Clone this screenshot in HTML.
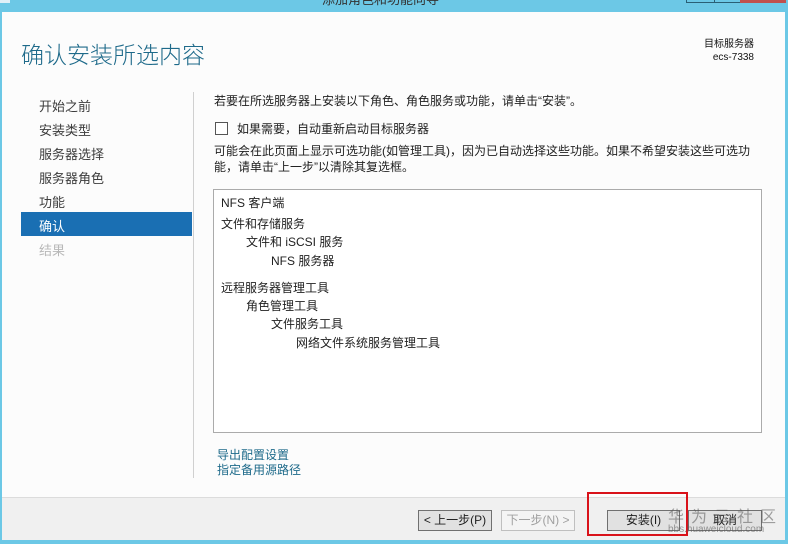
<!DOCTYPE html>
<html><head><meta charset="utf-8"><style>
*{margin:0;padding:0;box-sizing:border-box}
body{width:788px;height:544px;overflow:hidden;background:#6cc8e6;font-family:"Liberation Sans","Noto Sans CJK SC",sans-serif;position:relative;font-size:12px;color:#1e1e1e}
.a{position:absolute}
.win{left:2px;top:12px;width:783px;height:528px;background:#fcfcfc}
.nav{left:39px;font-size:13px;color:#3c3c3c}
.t{font-size:12px;color:#1e1e1e;white-space:nowrap}
.btn{height:21px;border:1px solid #707070;background:#e1e1e1;font-size:12px;text-align:center;line-height:19px}
</style></head><body>
<div class="a" style="left:0;top:0;width:10px;height:3px;background:#e0f0f8"></div>
<div class="a t" style="left:322px;top:-11px;color:#333;font-size:13px">添加角色和功能向导</div>
<div class="a" style="left:686px;top:0;width:28px;height:3px;border-left:1px solid #2a5f75;border-bottom:1px solid #2a5f75"></div>
<div class="a" style="left:714px;top:0;width:26px;height:3px;border-left:1px solid #2a5f75;border-bottom:1px solid #2a5f75"></div>
<div class="a" style="left:740px;top:0;width:46px;height:3px;background:#c0504d"></div>
<div class="a win"></div>
<div class="a" style="left:21px;top:36px;font-size:23px;color:#1e6a8a;font-weight:300">确认安装所选内容</div>
<div class="a t" style="right:34px;top:38px;font-size:10px;text-align:right;line-height:13px;color:#111">目标服务器<br>ecs-7338</div>
<div class="a nav" style="top:96px">开始之前</div>
<div class="a nav" style="top:120px">安装类型</div>
<div class="a nav" style="top:144px">服务器选择</div>
<div class="a nav" style="top:168px">服务器角色</div>
<div class="a nav" style="top:192px">功能</div>
<div class="a" style="left:21px;top:212px;width:171px;height:24px;background:#1a6fb3"></div>
<div class="a nav" style="top:216px;color:#fff">确认</div>
<div class="a nav" style="top:240px;color:#b8b8b8">结果</div>
<div class="a" style="left:193px;top:92px;width:1px;height:386px;background:#d0d0d0"></div>
<div class="a t" style="left:214px;top:92px">若要在所选服务器上安装以下角色、角色服务或功能，请单击“安装”。</div>
<div class="a" style="left:215px;top:122px;width:13px;height:13px;border:1px solid #555;background:#fff"></div>
<div class="a t" style="left:237px;top:120px">如果需要，自动重新启动目标服务器</div>
<div class="a t" style="left:214px;top:143px;line-height:16px">可能会在此页面上显示可选功能(如管理工具)，因为已自动选择这些功能。如果不希望安装这些可选功<br>能，请单击“上一步”以清除其复选框。</div>
<div class="a" style="left:213px;top:189px;width:549px;height:244px;border:1px solid #ababab;background:#fff"></div>
<div class="a t" style="left:221px;top:194px">NFS 客户端</div>
<div class="a t" style="left:221px;top:215px">文件和存储服务</div>
<div class="a t" style="left:246px;top:233px">文件和 iSCSI 服务</div>
<div class="a t" style="left:271px;top:252px">NFS 服务器</div>
<div class="a t" style="left:221px;top:279px">远程服务器管理工具</div>
<div class="a t" style="left:246px;top:297px">角色管理工具</div>
<div class="a t" style="left:271px;top:315px">文件服务工具</div>
<div class="a t" style="left:296px;top:334px">网络文件系统服务管理工具</div>
<div class="a t" style="left:217px;top:448px;color:#1e6a8a;line-height:15px">导出配置设置<br>指定备用源路径</div>
<div class="a" style="left:2px;top:497px;width:783px;height:43px;background:#f0f0f0;border-top:1px solid #dcdcdc"></div>
<div class="a btn" style="left:418px;top:510px;width:74px">&lt; 上一步(P)</div>
<div class="a btn" style="left:501px;top:510px;width:74px;color:#a0a0a0;border-color:#bfbfbf;background:#f4f4f4">下一步(N) &gt;</div>
<div class="a btn" style="left:607px;top:510px;width:73px">安装(I)</div>
<div class="a btn" style="left:688px;top:510px;width:74px">取消</div>
<div class="a" style="left:587px;top:492px;width:101px;height:44px;border:2px solid #d9121a"></div>
<div class="a t" style="left:668px;top:503px;font-size:16px;color:rgba(90,90,90,0.55);letter-spacing:7px">华为云社区</div>
<div class="a t" style="left:668px;top:524px;font-size:10px;color:rgba(90,90,90,0.6)">bbs.huaweicloud.com</div>
</body></html>
